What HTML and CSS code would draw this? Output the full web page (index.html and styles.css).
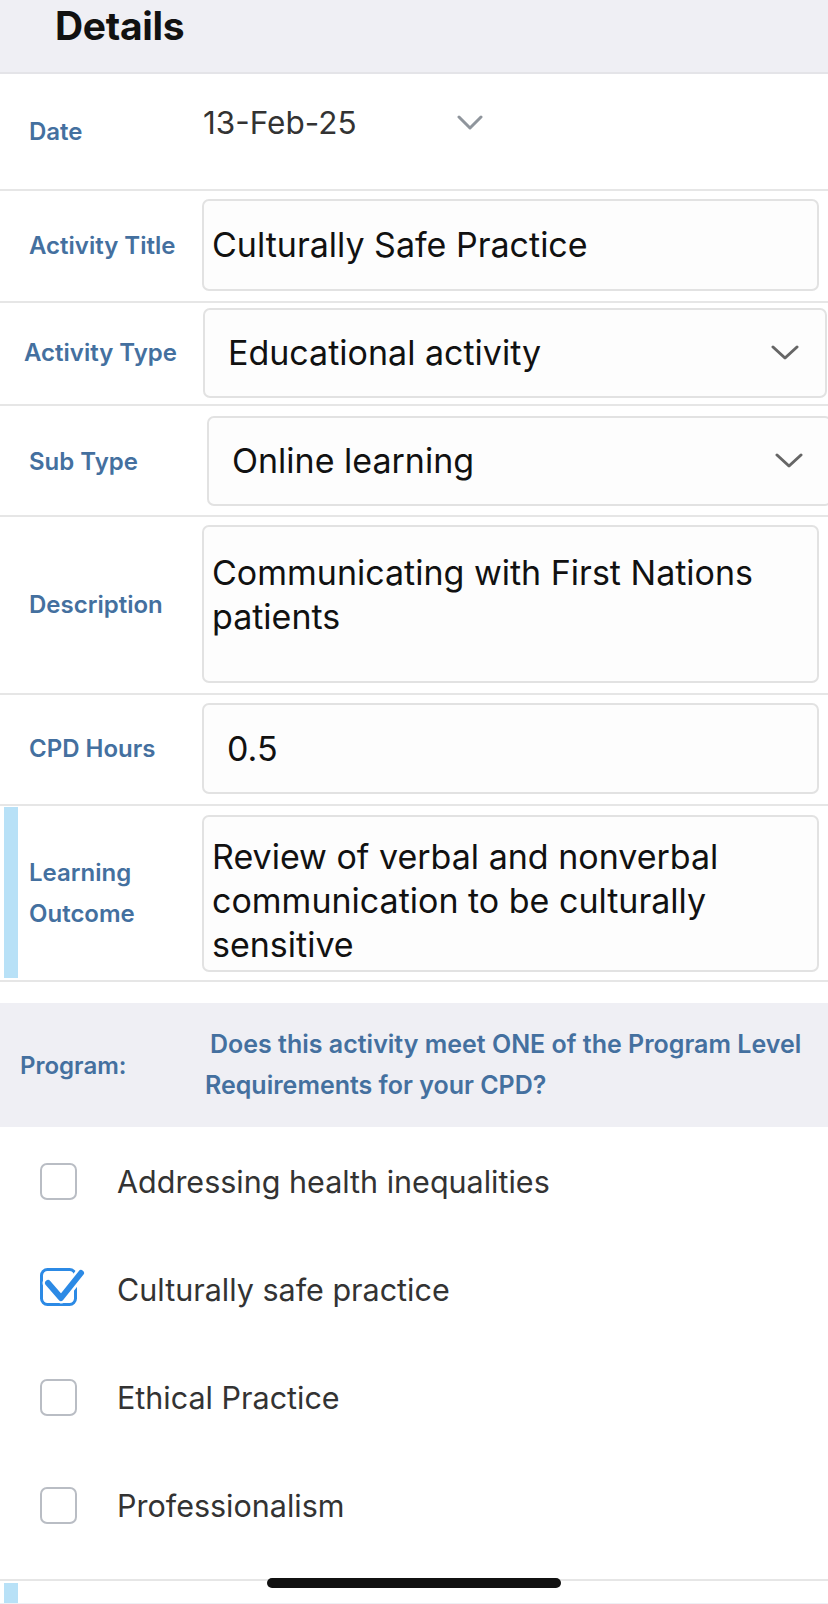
FILE: index.html
```html
<!DOCTYPE html>
<html lang="en">
<head>
<meta charset="utf-8">
<title>Details</title>
<link rel="stylesheet" href="styles.css">
</head>
<body>
<div class="screen">
  <header class="page-header"><h1 class="page-title">Details</h1></header>

  <div class="row row-date">
    <div class="label">Date</div>
    <div class="date-field">
      <span class="date-value">13-Feb-25</span>
      <svg class="chev chev-light" viewBox="0 0 26 16" width="26" height="16"><polyline points="2,2 13,13 24,2"/></svg>
    </div>
  </div>

  <div class="row row-title">
    <div class="label">Activity Title</div>
    <div class="box box-title">Culturally Safe Practice</div>
  </div>

  <div class="row row-type">
    <div class="label label-tight">Activity Type</div>
    <div class="box box-select box-type">
      <span>Educational activity</span>
      <svg class="chev" viewBox="0 0 28 16" width="28" height="16"><polyline points="2,2 14,13 26,2"/></svg>
    </div>
  </div>

  <div class="row row-sub">
    <div class="label">Sub Type</div>
    <div class="box box-select box-sub">
      <span>Online learning</span>
      <svg class="chev" viewBox="0 0 28 16" width="28" height="16"><polyline points="2,2 14,13 26,2"/></svg>
    </div>
  </div>

  <div class="row row-desc">
    <div class="label">Description</div>
    <div class="box box-multi box-desc">Communicating with First Nations patients</div>
  </div>

  <div class="row row-hours">
    <div class="label">CPD Hours</div>
    <div class="box box-hours">0.5</div>
  </div>

  <div class="row row-outcome">
    <div class="label label-marked">Learning<br>Outcome</div>
    <div class="box box-multi box-outcome">Review of verbal and nonverbal communication to be culturally sensitive</div>
  </div>

  <div class="spacer"></div>

  <section class="program">
    <div class="program-label">Program:</div>
    <div class="program-question"><span class="q-first">Does this activity meet ONE of the Program Level</span><br>Requirements for your CPD?</div>
  </section>

  <ul class="options">
    <li class="option">
      <span class="checkbox"></span>
      <span class="option-text">Addressing health inequalities</span>
    </li>
    <li class="option">
      <svg class="checkbox-checked" viewBox="0 0 46 40" width="46" height="40">
        <rect x="1.5" y="2.5" width="34" height="35" rx="6" ry="6" class="cb-rect"/>
        <polyline points="8,16 21,31 41,6" class="cb-gap"/>
        <polyline points="8,16 21,31 41,6" class="cb-check"/>
      </svg>
      <span class="option-text">Culturally safe practice</span>
    </li>
    <li class="option">
      <span class="checkbox"></span>
      <span class="option-text">Ethical Practice</span>
    </li>
    <li class="option">
      <span class="checkbox"></span>
      <span class="option-text">Professionalism</span>
    </li>
  </ul>

  <div class="row-next">
    <div class="marker"></div>
  </div>
  <div class="footer-strip"></div>

  <div class="home-indicator"></div>
</div>
</body>
</html>
```

FILE: styles.css
```css
html, body {
  margin: 0;
  padding: 0;
  background: #ffffff;
}
body {
  font-family: Inter, "Noto Sans", "Liberation Sans", sans-serif;
  color: #111;
  overflow: hidden;
}
.screen {
  position: relative;
  width: 828px;
  height: 1604px;
  overflow: hidden;
}

/* header */
.page-header {
  height: 74px;
  background: #efeff4;
  border-bottom: 2px solid #e4e4e8;
  box-sizing: border-box;
  padding: 3px 0 0 55px;
}
.page-title {
  margin: 0;
  font-size: 39px;
  line-height: 46px;
  font-weight: 700;
  color: #111;
  letter-spacing: -0.3px;
}

/* rows */
.row {
  display: grid;
  grid-template-columns: 202px 1fr;
  align-items: center;
  border-bottom: 2px solid #e6e6e6;
  box-sizing: border-box;
}
.label {
  padding-left: 29px;
  font-size: 24px;
  line-height: 41px;
  font-weight: 600;
  color: #44709f;
}
.label-tight {
  padding-left: 24px;
}
.label-marked {
  align-self: stretch;
  display: flex;
  align-items: center;
  margin-left: 4px;
  border-left: 14px solid #b8e1f7;
  padding-left: 11px;
  margin-top: 1px;
  margin-bottom: 2px;
}

.box {
  box-sizing: border-box;
  border: 2px solid #e2e2e2;
  border-radius: 7px;
  background: #fdfdfd;
  font-size: 34px;
  line-height: 44px;
  color: #111;
  margin-right: 9px;
}

/* date */
.row-date {
  height: 117px;
}
.date-field {
  align-self: start;
  margin-top: 31px;
  width: 280px;
  display: flex;
  align-items: center;
  justify-content: space-between;
  padding-left: 1px;
}
.date-value {
  font-size: 31.5px;
  line-height: 36px;
  color: #333;
}
.chev {
  fill: none;
  stroke: #666;
  stroke-width: 3;
  stroke-linecap: round;
  stroke-linejoin: round;
}
.chev-light {
  stroke: #8f959c;
}

/* title */
.row-title {
  height: 112px;
  padding: 7px 0 9px;
}
.box-title {
  height: 92px;
  display: flex;
  align-items: center;
  padding-left: 8px;
}

/* select boxes */
.row-type {
  height: 103px;
  padding: 4px 0 6px;
}
.row-sub {
  height: 111px;
  padding: 9px 0 8px;
}
.box-select {
  height: 90px;
  display: flex;
  align-items: center;
  justify-content: space-between;
  padding: 0 26px 0 23px;
}
.box-type {
  margin-left: 1px;
  margin-right: 1px;
}
.box-sub {
  margin-left: 5px;
  margin-right: -4px;
  padding-right: 27px;
}

/* description */
.row-desc {
  height: 178px;
  padding: 8px 0 10px;
}
.box-multi {
  align-self: stretch;
  padding-left: 8px;
  padding-right: 16px;
}
.box-desc {
  padding-top: 24px;
}

/* hours */
.row-hours {
  height: 111px;
  padding: 8px 0 10px;
}
.box-hours {
  height: 91px;
  display: flex;
  align-items: center;
  padding-left: 23px;
}

/* outcome */
.row-outcome {
  height: 176px;
  padding: 0;
}
.box-outcome {
  margin-top: 9px;
  margin-bottom: 8px;
  padding-top: 18px;
}

.spacer {
  height: 21px;
}

/* program */
.program {
  height: 124px;
  background: #efeff4;
  display: grid;
  grid-template-columns: 205px 1fr;
  align-items: center;
}
.program-label {
  padding-left: 20px;
  font-size: 24px;
  font-weight: 600;
  color: #44709f;
}
.program-question {
  font-size: 25px;
  line-height: 41px;
  font-weight: 600;
  color: #44709f;
  white-space: nowrap;
}
.q-first {
  padding-left: 5px;
}

/* options */
.options {
  list-style: none;
  margin: 0;
  padding: 0 0 20px;
}
.option {
  height: 108px;
  display: flex;
  align-items: center;
  padding-left: 40px;
}
.checkbox {
  width: 37px;
  height: 37px;
  box-sizing: border-box;
  border: 2.5px solid #b9bdc4;
  border-radius: 7px;
  margin-right: 40px;
  flex: none;
}
.checkbox-checked {
  flex: none;
  margin-right: 31px;
  margin-top: -4px;
}
.cb-rect {
  fill: none;
  stroke: #2c8ae5;
  stroke-width: 3;
}
.cb-gap {
  fill: none;
  stroke: #ffffff;
  stroke-width: 11;
  stroke-linecap: round;
  stroke-linejoin: round;
}
.cb-check {
  fill: none;
  stroke: #2c8ae5;
  stroke-width: 6;
  stroke-linecap: round;
  stroke-linejoin: round;
}
.option-text {
  font-size: 30.5px;
  color: #333;
}

/* bottom */
.row-next {
  border-top: 2px solid #e6e6e6;
  height: 20px;
  padding-top: 2px;
}
.marker {
  margin-left: 4px;
  width: 14px;
  height: 20px;
  background: #b8e1f7;
}
.footer-strip {
  height: 10px;
  background: #efeff4;
}
.home-indicator {
  position: absolute;
  left: 267px;
  top: 1578px;
  width: 294px;
  height: 10px;
  border-radius: 5px;
  background: #111;
}
```
